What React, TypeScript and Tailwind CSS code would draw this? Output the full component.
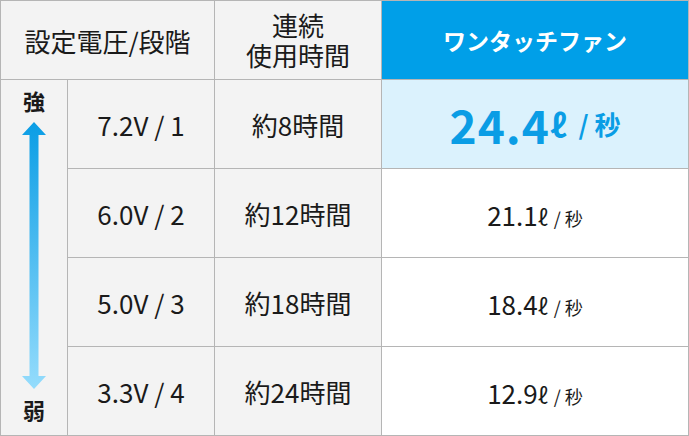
// 設定電圧ごとの連続使用時間と風量の比較表
const rows = [
  { volt: '7.2V / 1', time: '約8時間', flow: '24.4', hl: true },
  { volt: '6.0V / 2', time: '約12時間', flow: '21.1', hl: false },
  { volt: '5.0V / 3', time: '約18時間', flow: '18.4', hl: false },
  { volt: '3.3V / 4', time: '約24時間', flow: '12.9', hl: false },
];

function PowerArrow() {
  return (
    <svg width="24" height="267" viewBox="0 0 24 267" aria-hidden="true">
      <defs>
        <linearGradient id="arrowGrad" x1="0" y1="0" x2="0" y2="1">
          <stop offset="0" stopColor="#0a9de5" />
          <stop offset="1" stopColor="#95dcfc" />
        </linearGradient>
      </defs>
      <polygon
        points="12,0 24,13 16.5,13 16.5,254 24,254 12,267 0,254 7.5,254 7.5,13 0,13"
        fill="url(#arrowGrad)"
      />
    </svg>
  );
}

export default function App() {
  return (
    <div
      className="w-[689px] h-[436px] bg-white text-[#1a1a1a]"
      style={{ fontFamily: '"Noto Sans CJK JP", "Noto Sans", sans-serif' }}
    >
      <div className="grid h-full grid-cols-[66px_146px_166px_306px] grid-rows-[78px_88px_88px_88px_88px] gap-px bg-[#b5b5b5] p-px">
        {/* 見出し */}
        <div className="col-span-2 flex items-center justify-center bg-[#f3f3f3] text-[26px]">
          設定電圧/段階
        </div>
        <div className="flex flex-col items-center justify-center bg-[#f3f3f3] text-[26px] leading-[30px]">
          <span>連続</span>
          <span>使用時間</span>
        </div>
        <div className="flex items-center justify-center bg-[#009fe8] text-[23px] font-bold text-white">
          ワンタッチファン
        </div>

        {/* 強弱 */}
        <div className="row-span-4 flex flex-col items-center bg-[#f3f3f3] pt-[8px]">
          <span className="text-[22px] font-bold leading-[24px]">強</span>
          <div className="mt-[10px]">
            <PowerArrow />
          </div>
          <span className="mt-[8px] text-[22px] font-bold leading-[24px]">弱</span>
        </div>

        {rows.map((r) => (
          <div key={r.volt} className="contents">
            <div className="flex items-center justify-center bg-[#f3f3f3] text-[26px]">{r.volt}</div>
            <div className="flex items-center justify-center bg-[#f3f3f3] text-[26px]">{r.time}</div>
            {r.hl ? (
              <div className="flex items-center justify-center bg-[#dbf2fd] font-bold text-[#0a9de5]">
                <span className="text-[46px] leading-none tracking-[1px]">{r.flow}</span>
                <span className="text-[32px] leading-none">ℓ</span>
                <span className="ml-[12px] text-[26px] leading-none">/ 秒</span>
              </div>
            ) : (
              <div className="flex items-baseline justify-center bg-white pt-[2px] leading-[88px]">
                <span className="text-[26px]">{r.flow}</span>
                <span className="text-[22px]">ℓ</span>
                <span className="ml-[6px] text-[18px]">/ 秒</span>
              </div>
            )}
          </div>
        ))}
      </div>
    </div>
  );
}
